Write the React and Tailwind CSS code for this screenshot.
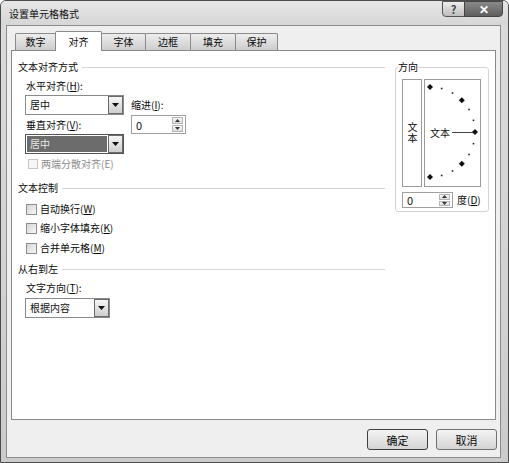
import React from "react";

const U = ({ children }) => <span className="underline underline-offset-[1px]">{children}</span>;

const DownTri = () => (
  <svg width="7" height="4" viewBox="0 0 7 4">
    <path d="M0 0h7L3.5 4z" fill="#111" />
  </svg>
);

function Dropdown({ value, width, active }) {
  return (
    <div className={`flex h-[20px] border ${active ? "border-[#555555]" : "border-[#8a8a8a]"} bg-white ${width}`}>
      <div
        className={`flex-1 flex items-center pl-[3px] m-px ${
          active ? "bg-[#6c6c6c] text-[#e6e6e6]" : "text-[#111]"
        }`}
      >
        {value}
      </div>
      <div className="w-[15px] border border-[#6a6a6a] bg-gradient-to-b from-[#f6f6f6] to-[#cfcfcf] flex items-center justify-center">
        <DownTri />
      </div>
    </div>
  );
}

function Spin({ width, height }) {
  return (
    <div className={`flex border border-[#a0a0a0] bg-white ${width} ${height}`}>
      <div className="flex-1 pl-[4px] flex items-center text-[#111] text-[11px]">0</div>
      <div className="w-[11px] flex flex-col my-px mr-[2px] gap-px">
        <div className="flex-1 border border-[#b4b4b4] bg-gradient-to-b from-[#f8f8f8] to-[#dedede] flex items-center justify-center">
          <svg width="5" height="3" viewBox="0 0 5 3">
            <path d="M0 3h5L2.5 0z" fill="#333" />
          </svg>
        </div>
        <div className="flex-1 border border-[#b4b4b4] bg-gradient-to-b from-[#f8f8f8] to-[#dedede] flex items-center justify-center">
          <svg width="5" height="3" viewBox="0 0 5 3">
            <path d="M0 0h5L2.5 3z" fill="#333" />
          </svg>
        </div>
      </div>
    </div>
  );
}

function Check({ children, className = "" }) {
  return (
    <div className={`flex items-center h-[16px] ${className}`}>
      <div className="w-[11px] h-[11px] border border-[#8e8e8e] bg-gradient-to-br from-[#d6d6d6] to-[#f7f7f7]" />
      <span className="ml-[3px]">{children}</span>
    </div>
  );
}

function GroupHeader({ children, className = "" }) {
  return (
    <div className={`flex items-center h-[16px] ${className}`}>
      <span>{children}</span>
      <div className="flex-1 ml-[4px] border-t border-[#d6d6d6]" />
    </div>
  );
}

function Dial() {
  const cx = 5;
  const cy = 52;
  const r = 45;
  const marks = [];
  for (let a = -90; a <= 90; a += 15) {
    const t = (a * Math.PI) / 180;
    const x = cx + r * Math.cos(t);
    const y = cy - r * Math.sin(t);
    if (a % 45 === 0) {
      marks.push(<path key={a} d={`M${x} ${y - 3}L${x + 3} ${y}L${x} ${y + 3}L${x - 3} ${y}z`} fill="#111" />);
    } else {
      marks.push(<rect key={a} x={x - 0.8} y={y - 0.8} width="1.6" height="1.6" fill="#222" />);
    }
  }
  return (
    <div className="relative w-[57px] h-[108px] border border-[#9a9a9a] bg-white">
      <svg className="absolute inset-0" width="55" height="106" viewBox="0 0 55 106">
        <line x1="27" y1="52.5" x2="48" y2="52.5" stroke="#444" strokeWidth="1" />
        {marks}
      </svg>
      <div className="absolute left-[5px] top-[45px] leading-[16px] text-[#111]">文本</div>
    </div>
  );
}

const tabs = [
  { label: "数字", w: "w-[41px]" },
  { label: "对齐", w: "w-[47px]", active: true },
  { label: "字体", w: "w-[45px]" },
  { label: "边框", w: "w-[46px]" },
  { label: "填充", w: "w-[46px]" },
  { label: "保护", w: "w-[43px]" },
];

export default function App() {
  return (
    <div className="w-[509px] h-[463px] flex flex-col border border-[#4c4c4c] rounded-t-[6px] bg-gradient-to-b from-[#dcdcdc] to-[#cbcbcb] overflow-hidden font-['Noto_Sans_CJK_SC','Microsoft_YaHei',sans-serif] text-[10px] leading-[16px] text-[#0a0a0a]">
      {/* title bar */}
      <div className="h-[24px] flex justify-between bg-gradient-to-b from-[#e6e6e6] to-[#d6d6d6]">
        <div className="pl-[8px] pt-[5px] text-[#111]">设置单元格格式</div>
        <div className="flex mr-[5px] h-[16px]">
          <div className="w-[23px] border border-[#555] rounded-bl-[4px] bg-gradient-to-b from-[#eeeeee] to-[#bdbdbd] flex items-center justify-center text-[11px] font-bold text-[#444]">
            ?
          </div>
          <div className="w-[39px] -ml-px border border-[#444] rounded-br-[4px] bg-gradient-to-b from-[#8a8a8a] to-[#5e5e5e] flex items-center justify-center text-[12px] font-bold text-white">
            ✕
          </div>
        </div>
      </div>

      {/* body */}
      <div className="flex-1 ml-[5px] mr-[7px] mb-[4px] border border-[#8c8c8c] bg-[#efefef] pt-[4px] flex flex-col">
        <div className="flex items-end h-[20px] pl-[8px]">
          {tabs.map((t, i) => (
            <div
              key={t.label}
              className={`${t.w} ${i > 0 ? "-ml-px" : ""} flex items-center justify-center border-t border-l border-r border-[#8a8a8a] rounded-t-[2px] ${
                t.active
                  ? "relative z-10 h-[20px] -mb-px bg-white"
                  : "h-[17px] bg-gradient-to-b from-[#eeeeee] to-[#cdcdcd]"
              }`}
            >
              {t.label}
            </div>
          ))}
        </div>

        <div className="ml-[4px] w-[485px] h-[370px] border border-[#8a8a8a] bg-white flex pl-[6px]">
          {/* left column */}
          <div className="w-[367px] pt-[8px]">
            <GroupHeader>文本对齐方式</GroupHeader>
            <div className="pl-[7px]">
              <div className="mt-[3px] ml-px">
                水平对齐(<U>H</U>):
              </div>
              <div className="flex mt-[1px]">
                <div className="flex flex-col">
                  <Dropdown value="居中" width="w-[99px]" />
                  <div className="mt-[2px] ml-px">
                    垂直对齐(<U>V</U>):
                  </div>
                  <div className="mt-[1px]">
                    <Dropdown value="居中" width="w-[99px]" active />
                  </div>
                </div>
                <div className="flex flex-col ml-[7px]">
                  <div className="mt-[2px]">
                    缩进(<U>I</U>):
                  </div>
                  <div className="mt-[2px]">
                    <Spin width="w-[55px]" height="h-[19px]" />
                  </div>
                </div>
              </div>
              <div className="flex items-center h-[16px] mt-[2px] ml-[3px]">
                <div className="w-[10px] h-[10px] border border-[#c6c6c6] bg-[#f6f6f6]" />
                <span className="ml-[3px] text-[#8c8c8c]">两端分散对齐(E)</span>
              </div>
            </div>

            <GroupHeader className="mt-[8px]">文本控制</GroupHeader>
            <div className="pl-[8px]">
              <Check className="mt-[5px]">
                自动换行(<U>W</U>)
              </Check>
              <Check className="mt-[3px]">
                缩小字体填充(<U>K</U>)
              </Check>
              <Check className="mt-[4px]">
                合并单元格(<U>M</U>)
              </Check>
            </div>

            <GroupHeader className="mt-[5px]">从右到左</GroupHeader>
            <div className="pl-[7px]">
              <div className="mt-[3px] ml-px">
                文字方向(<U>T</U>):
              </div>
              <div className="mt-[2px]">
                <Dropdown value="根据内容" width="w-[85px]" />
              </div>
            </div>
          </div>

          {/* orientation group */}
          <fieldset className="ml-[10px] mt-[8px] w-[94px] self-start border border-[#d3d3d3] rounded-[3px] px-[2px] pb-[3px]">
            <legend className="leading-[16px]">方向</legend>
            <div className="pl-[4px]">
              <div className="flex gap-[2px] mt-[4px]">
                <div className="w-[20px] h-[108px] border border-[#9a9a9a] flex items-center justify-center">
                  <span className="[writing-mode:vertical-rl] tracking-[1px] leading-[16px]">文本</span>
                </div>
                <Dial />
              </div>
              <div className="flex items-center mt-[5px]">
                <Spin width="w-[51px]" height="h-[16px]" />
                <span className="ml-[4px]">
                  度(<U>D</U>)
                </span>
              </div>
            </div>
          </fieldset>
        </div>

        <div className="flex justify-end gap-[8px] mt-[9px] pr-[3px]">
          <button className="w-[61px] h-[21px] rounded-[3px] border border-[#3f3f3f] bg-gradient-to-b from-[#f4f4f4] to-[#d4d4d4] flex items-center justify-center text-[11px]">
            确定
          </button>
          <button className="w-[61px] h-[21px] rounded-[3px] border border-[#707070] bg-gradient-to-b from-[#f4f4f4] to-[#d4d4d4] flex items-center justify-center text-[11px]">
            取消
          </button>
        </div>
      </div>
    </div>
  );
}
